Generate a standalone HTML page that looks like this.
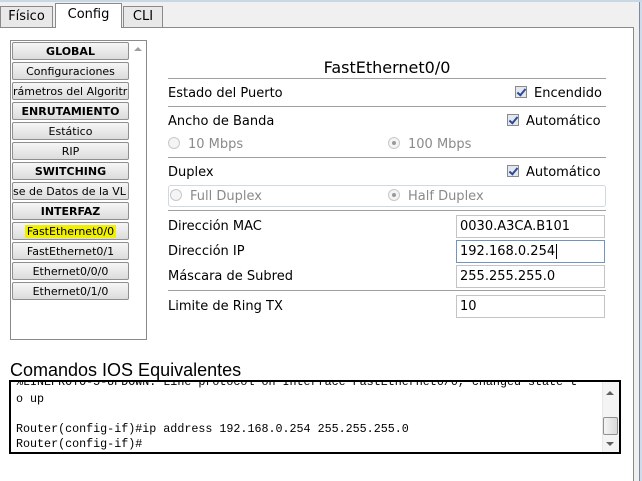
<!DOCTYPE html>
<html><head><meta charset="utf-8"><style>
*{margin:0;padding:0;box-sizing:border-box}
body{width:642px;height:481px;background:#f0f0f0;font-family:"DejaVu Sans","Liberation Sans",sans-serif;font-size:13px;color:#000;position:relative;overflow:hidden}
.a{position:absolute}
.tab{position:absolute;top:6px;height:21px;border:1px solid #8a8a8a;border-bottom:none;background:#e8e8e8;font-size:13px;text-align:center;line-height:19px}
.btn{position:absolute;left:12px;width:117px;height:18px;border:1px solid #8f8f8f;border-radius:2px;background:linear-gradient(#f6f6f6,#dcdcdc);font-size:11px;text-align:center;line-height:17px;white-space:nowrap;overflow:hidden}
.b{font-weight:bold}
.hr{position:absolute;left:168px;width:438px;height:1px;background:#a0a0a0}
.lbl{position:absolute;left:168px;font-size:13px}
.cb{display:inline-block;width:12px;height:12px;border:1px solid #8a8a8a;background:#e4e8ee;vertical-align:-1px;margin-right:7px;position:relative}
.cb:after{content:"";position:absolute;left:3px;top:0px;width:3px;height:7px;border:solid #2a4a9a;border-width:0 2px 2px 0;transform:rotate(40deg)}
.rd{display:inline-block;width:12px;height:12px;border:1px solid #c8c8c8;border-radius:50%;background:#f4f4f4;vertical-align:-1px;margin-right:8px;position:relative}
.rd.on:after{content:"";position:absolute;left:3px;top:3px;width:4px;height:4px;border-radius:50%;background:#9a9a9a}
.gr{color:#8a8a8a}
.inp{position:absolute;left:456px;width:149px;height:23px;border:1px solid #c4c4c4;background:#fff;font-size:13px;padding-left:3px;line-height:22px}
.mono{font-family:"Liberation Mono","DejaVu Sans Mono",monospace;font-size:11.7px;position:absolute;left:5px;white-space:pre}
</style></head><body>
<div class="a" style="left:0;top:0;width:642px;height:2px;background:#c9d6e6"></div>
<div class="a" style="left:639px;top:2px;width:3px;height:479px;background:#cfdcec;border-left:1px solid #7d8a99"></div>
<div class="a" style="left:0;top:27px;width:634px;height:454px;background:#fff;border-top:1px solid #8a8a8a;border-right:1px solid #8a8a8a"></div>
<div class="tab" style="left:0;width:53px">Físico</div>
<div class="tab" style="left:55px;top:3px;height:25px;width:67px;background:#fff;line-height:22px">Config</div>
<div class="tab" style="left:123px;width:40px">CLI</div>

<div class="a" style="left:10px;top:40px;width:137px;height:300px;border:1px solid #8a8a8a;background:#fff"></div>
<div class="a" style="left:134px;top:47px;width:0;height:0;border-left:4px solid transparent;border-right:4px solid transparent;border-bottom:4px solid #a0a0a0"></div>
<div class="btn b" style="top:42px">GLOBAL</div>
<div class="btn" style="top:62px">Configuraciones</div>
<div class="btn" style="top:82px;text-align:left">rámetros del Algoritr</div>
<div class="btn b" style="top:102px">ENRUTAMIENTO</div>
<div class="btn" style="top:122px">Estático</div>
<div class="btn" style="top:142px">RIP</div>
<div class="btn b" style="top:162px">SWITCHING</div>
<div class="btn" style="top:182px;text-align:left">se de Datos de la VL</div>
<div class="btn b" style="top:202px">INTERFAZ</div>
<div class="btn" style="top:222px"><span style="background:#f0f000;padding:0 2px">FastEthernet0/0</span></div>
<div class="btn" style="top:242px">FastEthernet0/1</div>
<div class="btn" style="top:262px">Ethernet0/0/0</div>
<div class="btn" style="top:282px">Ethernet0/1/0</div>

<div class="a" style="left:168px;width:438px;top:58px;text-align:center;font-size:16px">FastEthernet0/0</div>
<div class="hr" style="top:78px"></div>
<div class="lbl" style="top:86px">Estado del Puerto</div>
<div class="a" style="left:515px;top:86px"><span class="cb"></span>Encendido</div>
<div class="hr" style="top:106px"></div>
<div class="lbl" style="top:114px">Ancho de Banda</div>
<div class="a" style="left:507px;top:114px"><span class="cb"></span>Automático</div>
<div class="lbl gr" style="top:137px"><span class="rd"></span>10 Mbps</div>
<div class="a gr" style="left:388px;top:137px"><span class="rd on"></span>100 Mbps</div>
<div class="hr" style="top:157px"></div>
<div class="lbl" style="top:165px">Duplex</div>
<div class="a" style="left:507px;top:165px"><span class="cb"></span>Automático</div>
<div class="a" style="left:168px;top:185px;width:438px;height:22px;border:1px solid #d0d8e0;border-radius:3px"></div>
<div class="lbl gr" style="top:189px;left:170px"><span class="rd"></span>Full Duplex</div>
<div class="a gr" style="left:388px;top:189px"><span class="rd on"></span>Half Duplex</div>
<div class="hr" style="top:210px"></div>
<div class="lbl" style="top:219px">Dirección MAC</div>
<div class="inp" style="top:215px">0030.A3CA.B101</div>
<div class="lbl" style="top:244px">Dirección IP</div>
<div class="inp" style="top:240px;border-color:#6f95c0">192.168.0.254<span style="border-left:1px solid #000;margin-left:1px"></span></div>
<div class="lbl" style="top:269px">Máscara de Subred</div>
<div class="inp" style="top:265px">255.255.255.0</div>
<div class="hr" style="top:290px"></div>
<div class="lbl" style="top:299px">Limite de Ring TX</div>
<div class="inp" style="top:295px">10</div>

<div class="a" style="left:10px;top:360px;font-size:18px;font-family:'Liberation Sans',sans-serif">Comandos IOS Equivalentes</div>
<div class="a" style="left:9px;top:380px;width:612px;height:74px;border:2px solid #000;background:#fff;overflow:hidden">
<div class="mono" style="top:-7px">%LINEPROTO-5-UPDOWN: Line protocol on Interface FastEthernet0/0, changed state t</div>
<div class="mono" style="top:10px">o up</div>
<div class="mono" style="top:40px">Router(config-if)#ip address 192.168.0.254 255.255.255.0</div>
<div class="mono" style="top:55px">Router(config-if)#</div>
<div class="a" style="right:0;top:0;width:17px;height:70px;background:#f4f4f4;border-left:1px solid #e8e8e8"></div>
<div class="a" style="right:5px;top:9px;border-left:4px solid transparent;border-right:4px solid transparent;border-bottom:4px solid #606060"></div>
<div class="a" style="right:1px;top:35px;width:15px;height:18px;border:1px solid #909090;border-radius:2px;background:linear-gradient(90deg,#f4f4f4,#dadada)"></div>
<div class="a" style="right:5px;top:60px;border-left:4px solid transparent;border-right:4px solid transparent;border-top:4px solid #606060"></div>
</div>
</body></html>
